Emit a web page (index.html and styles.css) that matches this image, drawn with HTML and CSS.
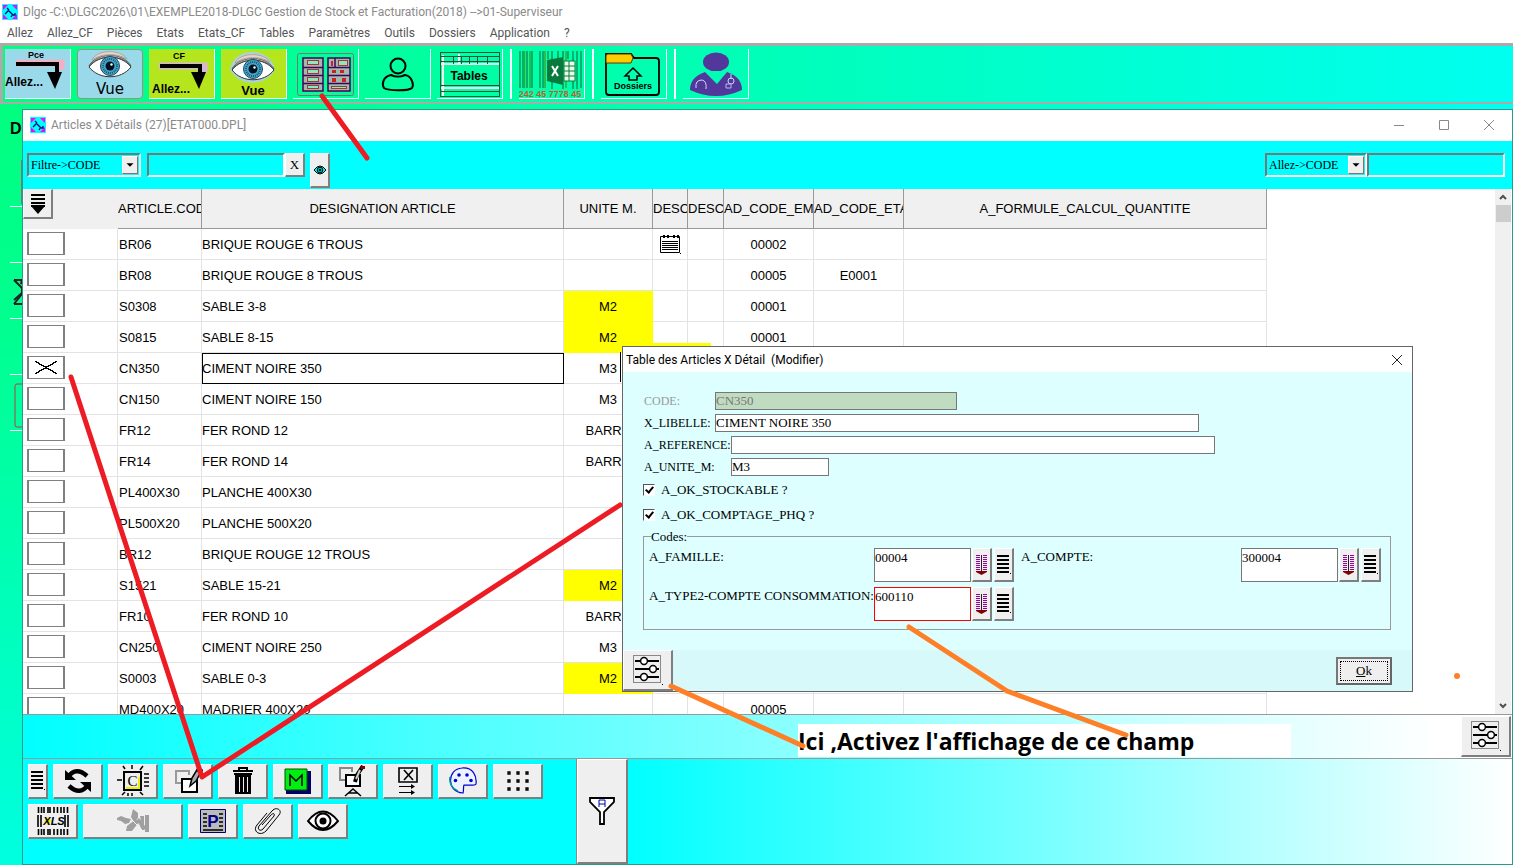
FILE: index.html
```html
<!DOCTYPE html>
<html lang="fr">
<head>
<meta charset="utf-8">
<title>Dlgc - Gestion de Stock et Facturation</title>
<link rel="stylesheet" href="styles.css">
</head>
<body>
<svg class="defs" width="0" height="0" aria-hidden="true">
  <symbol id="logo" viewBox="0 0 16 16">
    <rect width="16" height="16" fill="#0ff"/>
    <path d="M1 6V1h5zM10 1h5v5zM1 10v5h5zM10 15l5-5v5z" fill="#f0f"/>
    <path d="M5 4l2 2M6 6l5 5M13 9v2h-2M3 10l3-3M9 13l2-3" stroke="#008" stroke-width="1.3" fill="none"/>
  </symbol>
  <symbol id="eye-photo" viewBox="0 0 46 30">
    <path d="M2 15C8 2 36 0 44 15C36 3 10 4 2 15z" fill="#c9b8ac" stroke="#555" stroke-width=".8"/>
    <path d="M5 9C10 -2 34 -2 40 8C30 2 15 2 5 9z" fill="#e8d4c4" stroke="#a99a90" stroke-width=".8"/>
    <path d="M2 16C12 3 34 3 44 16C34 29 12 29 2 16z" fill="#fff" stroke="#333"/>
    <circle cx="23" cy="15" r="9.5" fill="#48a8c8" stroke="#246"/>
    <circle cx="23" cy="15" r="7" fill="none" stroke="#157" stroke-width="2" stroke-dasharray="1 1"/>
    <circle cx="23" cy="15" r="4.5" fill="#012"/>
    <circle cx="24.500" cy="13.500" r="1.200" fill="#fff"/>
  </symbol>
  <symbol id="sliders" viewBox="0 0 30 30">
    <rect x=".5" y=".5" width="27" height="27" fill="none" stroke="#888"/>
    <path d="M2 6h24M2 14h24M2 22h24" stroke="#000" stroke-width="2"/>
    <g fill="#fff" stroke="#000" stroke-width="1.500"><circle cx="11" cy="6" r="3.400"/><circle cx="20" cy="14" r="3.400"/><circle cx="11" cy="22" r="3.400"/></g>
    <path d="M29 29h1v1h-1z"/>
  </symbol>
  <symbol id="lines" viewBox="0 0 14 20">
    <path d="M0 1h12M0 5h12M0 9h12M0 13h12M0 17h12" stroke="#000" stroke-width="2"/><path d="M13 18h1v1h-1z"/>
  </symbol>
  <symbol id="pull" viewBox="0 0 12 20">
    <path d="M0 .5h4M0 2.500h4M0 4.500h4M0 6.500h4M0 8.500h4M0 10.500h4M0 12.500h4M0 14.500h4M7 .5h4M7 2.500h4M7 4.500h4M7 6.500h4M7 8.500h4M7 10.500h4M7 12.500h4M7 14.500h4" stroke="#909"/>
    <path d="M5.500 0v17" stroke="#222"/><path d="M0 16h11v1l-5.500 3L0 17z" fill="#800000"/>
  </symbol>
</svg>

<header class="app-title"><svg width="16" height="16"><use href="#logo"/></svg><h1>Dlgc -C:\DLGC2026\01\EXEMPLE2018-DLGC Gestion de Stock et Facturation(2018) --&gt;01-Superviseur</h1></header>
<nav class="menu">
  <button>Allez</button><button>Allez_CF</button><button>Pièces</button><button>Etats</button><button>Etats_CF</button><button>Tables</button><button>Paramètres</button><button>Outils</button><button>Dossiers</button><button>Application</button><button>?</button>
</nav>

<div class="ribbon">
  <button class="tool blue" aria-label="Allez pièces"><svg viewBox="0 0 64 48">
    <text x="23" y="8" class="t9">Pce</text><path d="M11 13h45v7" fill="none" stroke="#f0b0c8" stroke-width="7"/><path d="M11 14h41v9" fill="none" stroke="#000" stroke-width="4"/><path d="M42 22h15l-7 17z"/><text x="0" y="36" class="t14n">Allez...</text></svg></button>
  <button class="tool blue framed" aria-label="Vue pièces"><svg viewBox="0 0 64 48"><use href="#eye-photo" x="9" y="1" width="46" height="30"/><text x="32" y="44" class="t15" text-anchor="middle">Vue</text></svg></button>
  <button class="tool lime" aria-label="Allez CF"><svg viewBox="0 0 64 48">
    <text x="24" y="9" class="t9">CF</text><path d="M10 16h45v7" fill="none" stroke="#d8b8d0" stroke-width="7"/><path d="M11 16h40v9" fill="none" stroke="#000" stroke-width="4"/><path d="M42 22h15l-7 17z"/><text x="3" y="43" class="t14n">Allez...</text></svg></button>
  <button class="tool lime" aria-label="Vue CF"><svg viewBox="0 0 64 48"><path d="M9 20C12 -4 50 -4 54 20C44 36 20 38 9 20z" fill="#a8d4d8"/><use href="#eye-photo" x="9" y="4" width="46" height="30"/><text x="32" y="45" class="t13b" text-anchor="middle">Vue</text></svg></button>
  <button class="tool" aria-label="Articles"><svg viewBox="0 0 64 48">
    <rect x="4.500" y="3.500" width="56" height="42" rx="2" fill="none" stroke="#777"/>
    <g fill="#9fb8b0" stroke="#405" stroke-width="1.500"><rect x="10" y="8" width="20" height="33"/><rect x="35" y="8" width="22" height="33"/><path d="M10 17.500h20M10 25.500h20M10 33.500h20M35 17.500h22M35 25.500h22M35 33.500h22M42 8v9"/></g>
    <g fill="#8ce8c0" stroke="#a33"><rect x="14.500" y="10.500" width="11" height="4"/><rect x="14.500" y="19.500" width="11" height="4"/><rect x="14.500" y="27.500" width="11" height="4"/><rect x="14.500" y="35.500" width="11" height="3"/><rect x="45.500" y="10.500" width="9" height="5"/><rect x="38.500" y="36.500" width="15" height="2"/></g>
    <path d="M38 11h2v5h-2zM39 20h4v3h-4zM47 20h4v3h-4zM39 28h4v4h-4zM49 28h4v4h-4z" fill="#c22"/></svg></button>
  <button class="tool" aria-label="Tiers"><svg viewBox="0 0 64 48"><g fill="none" stroke="#000" stroke-width="2"><circle cx="33" cy="16" r="7.500"/><path d="M26 25C17 27 17 35 19 38C23 41 44 41 47 38C49 35 47 26 40 25C36 27 30 27 26 25z"/></g></svg></button>
  <button class="tool" aria-label="Tables"><svg viewBox="0 0 64 48"><path d="M3 14h60M3 38h60M6 5v41M22 4v10" stroke="#eee" stroke-width="2"/><path d="M3 2.500h60M3 6.500h60M3 11.500h60M3 35.500h60M3 41.500h60M3 46.500h60M3.500 2v45M62.500 2v45M16.500 6v8M24.500 6v8M32.500 6v8M40.500 6v8M50.500 6v8" stroke="#154" fill="none"/><text x="32" y="30" class="t12b" text-anchor="middle">Tables</text></svg></button>
  <span class="rule"></span>
  <button class="tool" aria-label="Export Excel"><svg viewBox="0 0 64 48"><path d="M1 1v37M4 1v37M8 1v37M13 1v37M21 1v37M24 1v37M29 1v8M33 1v38M39 1v8M44 1v38M49 1v8M54 1v38M58 1v38M62 1v37" stroke="#063"/><path d="M5.500 1v37M11 1v37M26 1v37M47 1v37" stroke="#3a3" stroke-width="1.500"/><path d="M28 10l16-3v28l-16-4z" fill="#087a3c"/><path d="M45 11h11v20H45z" fill="#eaffea" stroke="#087a3c"/><path d="M45 16h11M45 21h11M45 26h11M50 11v20" stroke="#087a3c"/><path d="M33 16l6 10M39 16l-6 10" stroke="#fff" stroke-width="2"/><text x="31" y="47" text-anchor="middle" class="t8r">242 45 7778 45</text></svg></button>
  <span class="rule"></span>
  <button class="tool" aria-label="Dossiers"><svg viewBox="0 0 64 48"><path d="M5 4h25l3 4h22q3 0 3 3v31q0 3-3 3H8q-3 0-3-3z" fill="none" stroke="#000" stroke-width="1.800"/><path d="M5 13V6q0-2 2-2h23l2 4-2 5z" fill="#fc0" stroke="#630"/><path d="M32 18l8 8h-4v4h-8v-4h-4z" fill="none" stroke="#000" stroke-width="1.500"/><text x="32" y="39" class="t9" text-anchor="middle">Dossiers</text></svg></button>
  <span class="rule"></span>
  <button class="tool" aria-label="Superviseur"><svg viewBox="0 0 64 48"><g fill="#53389c"><ellipse cx="33" cy="12" rx="13" ry="9.500"/><path d="M22 22q-15 5-15 18q26 12 52 0q0-13-15-18l-10 12z"/></g><path d="M24 21l9 11 9-11z" fill="#00ffb4"/><path d="M13 38q-1-8 6-8q5 1 4 9M48 24v5" stroke="#cdd8ff" fill="none"/><circle cx="48" cy="31" r="3" fill="none" stroke="#cdd8ff"/><path d="M43 34h5v4h-5z" fill="none" stroke="#aab8f0"/></svg></button>
</div>

<main class="workspace">
  <div class="strip"><svg width="22" height="340" aria-hidden="true"><text x="10" y="30" class="t16b">D</text><path d="M10 102.500h12M10 158.500h12M10 214.500h12M10 270.500h12M10 326.500h12" stroke="#fff"/><path d="M21.500 56v44" stroke="#778"/><path d="M14 176h8l-1 4 1-2M14 176l8 8v6l-8 10M14 200h8M14 196l8-7" fill="none" stroke="#222" stroke-width="2"/><path d="M22 280h-5q-2 0-2 2v39q0 2 2 2h5" fill="none" stroke="#a44"/></svg></div>

  <section class="window">
    <header class="win-title"><svg width="16" height="16"><use href="#logo"/></svg><h2>Articles X Détails (27)[ETAT000.DPL]</h2>
      <div class="win-buttons">
        <button aria-label="Réduire"><svg width="12" height="12"><path d="M1 6.500h10" stroke="#888"/></svg></button>
        <button aria-label="Agrandir"><svg width="12" height="12"><path d="M1.500 1.500h9v9h-9z" fill="none" stroke="#888"/></svg></button>
        <button aria-label="Fermer"><svg width="12" height="12"><path d="M1 1l10 10M11 1L1 11" stroke="#888"/></svg></button>
      </div></header>

    <div class="filters">
      <span class="combo wide"><select aria-label="Filtre"><option>Filtre-&gt;CODE</option></select><svg class="drop" viewBox="0 0 16 18"><path d="M4 7h8l-4 4z"/></svg></span>
      <input class="sunken gap" type="text" aria-label="Valeur du filtre">
      <button class="raised clear">X</button>
      <button class="raised peek" aria-label="Voir"><svg width="14" height="12" viewBox="0 0 14 12"><path d="M1 6q6-8 12 0q-6 8-12 0z" fill="#0ff" stroke="#000"/><circle cx="7" cy="6" r="2.800" fill="#0cc" stroke="#000"/><circle cx="7" cy="6" r="1.200"/></svg></button>
      <span class="combo goto"><select aria-label="Allez"><option>Allez-&gt;CODE</option></select><svg class="drop" viewBox="0 0 16 18"><path d="M4 7h8l-4 4z"/></svg></span>
      <input class="sunken" type="text" aria-label="Aller au code">
    </div>

    <div class="grid">
      <div class="grid-scroll">
      <table>
        <colgroup><col class="c-sel"><col class="c-code"><col class="c-name"><col class="c-unit"><col class="c-d1"><col class="c-d2"><col class="c-e"><col class="c-e"><col class="c-form"></colgroup>
        <thead><tr><th class="first"><button class="raised sort" aria-label="Trier"><svg width="16" height="20" viewBox="0 0 16 20"><path d="M1 1h14M1 5h14M1 9h14M1 12h14" stroke="#000" stroke-width="2"/><path d="M1 12h14l-7 8z"/></svg></button></th><th class="l">ARTICLE.COD</th><th>DESIGNATION ARTICLE</th><th>UNITE M.</th><th class="l">DESC</th><th class="l">DESC</th><th class="l">AD_CODE_EM</th><th class="l">AD_CODE_ETA</th><th>A_FORMULE_CALCUL_QUANTITE</th></tr></thead>
        <tbody>
        <tr><td><input type="checkbox" aria-label="BR06"></td><td>BR06</td><td>BRIQUE ROUGE 6 TROUS</td><td></td><td><svg class="note" width="22" height="20" viewBox="0 0 22 20"><path d="M1.500 2.500h19v16h-19z" fill="none" stroke="#000"/><path d="M4 1h2v3H4zM8 1h2v3H8zM14 1h2v3h-2zM18 1h2v3h-2zM21 19h1v1h-1z"/><path d="M3 7.500h16M3 9.500h16M3 11.500h16M3 13.500h16M3 15.500h16" stroke="#000"/></svg></td><td></td><td>00002</td><td></td><td></td></tr>
        <tr><td><input type="checkbox" aria-label="BR08"></td><td>BR08</td><td>BRIQUE ROUGE 8 TROUS</td><td></td><td></td><td></td><td>00005</td><td>E0001</td><td></td></tr>
        <tr><td><input type="checkbox" aria-label="S0308"></td><td>S0308</td><td>SABLE 3-8</td><td class="hl">M2</td><td></td><td></td><td>00001</td><td></td><td></td></tr>
        <tr><td><input type="checkbox" aria-label="S0815"></td><td>S0815</td><td>SABLE 8-15</td><td class="hl">M2</td><td></td><td></td><td>00001</td><td></td><td></td></tr>
        <tr><td><input type="checkbox" aria-label="CN350" checked></td><td>CN350</td><td class="focus">CIMENT NOIRE 350</td><td>M3</td><td></td><td></td><td></td><td></td><td></td></tr>
        <tr><td><input type="checkbox" aria-label="CN150"></td><td>CN150</td><td>CIMENT NOIRE 150</td><td>M3</td><td></td><td></td><td></td><td></td><td></td></tr>
        <tr><td><input type="checkbox" aria-label="FR12"></td><td>FR12</td><td>FER ROND 12</td><td>BARRE</td><td></td><td></td><td></td><td></td><td></td></tr>
        <tr><td><input type="checkbox" aria-label="FR14"></td><td>FR14</td><td>FER ROND 14</td><td>BARRE</td><td></td><td></td><td></td><td></td><td></td></tr>
        <tr><td><input type="checkbox" aria-label="PL400X30"></td><td>PL400X30</td><td>PLANCHE 400X30</td><td></td><td></td><td></td><td></td><td></td><td></td></tr>
        <tr><td><input type="checkbox" aria-label="PL500X20"></td><td>PL500X20</td><td>PLANCHE 500X20</td><td></td><td></td><td></td><td></td><td></td><td></td></tr>
        <tr><td><input type="checkbox" aria-label="BR12"></td><td>BR12</td><td>BRIQUE ROUGE 12 TROUS</td><td></td><td></td><td></td><td></td><td></td><td></td></tr>
        <tr><td><input type="checkbox" aria-label="S1521"></td><td>S1521</td><td>SABLE 15-21</td><td class="hl">M2</td><td></td><td></td><td></td><td></td><td></td></tr>
        <tr><td><input type="checkbox" aria-label="FR10"></td><td>FR10</td><td>FER ROND 10</td><td>BARRE</td><td></td><td></td><td></td><td></td><td></td></tr>
        <tr><td><input type="checkbox" aria-label="CN250"></td><td>CN250</td><td>CIMENT NOIRE 250</td><td>M3</td><td></td><td></td><td></td><td></td><td></td></tr>
        <tr><td><input type="checkbox" aria-label="S0003"></td><td>S0003</td><td>SABLE 0-3</td><td class="hl">M2</td><td></td><td></td><td></td><td></td><td></td></tr>
        <tr><td><input type="checkbox" aria-label="MD400X20"></td><td>MD400X20</td><td>MADRIER 400X20</td><td></td><td></td><td></td><td>00005</td><td></td><td></td></tr>
        </tbody>
      </table>
      </div>
      <div class="scrollbar"><svg width="8" height="16" viewBox="0 0 8 16"><path d="M1 10l3-3 3 3" fill="none" stroke="#505050" stroke-width="2"/></svg><span class="thumb"></span><svg class="down" width="8" height="16" viewBox="0 0 8 16"><path d="M1 6l3 3 3-3" fill="none" stroke="#505050" stroke-width="2"/></svg></div>
    </div>

    <div class="band"><button class="raised adjust" aria-label="Options"><svg width="30" height="30"><use href="#sliders"/></svg></button></div>

    <footer class="actions">
      <div class="buttons">
        <div class="line">
          <button class="raised slim" aria-label="Liste"><svg width="14" height="20"><use href="#lines"/></svg></button>
          <button class="raised" aria-label="Actualiser"><svg width="30" height="28" viewBox="0 0 30 28"><path d="M5 10Q13-1 24 9M25 18Q17 29 6 19" fill="none" stroke="#000" stroke-width="4.500"/><path d="M2 3v10h11zM28 25V15H17z"/></svg></button>
          <button class="raised" aria-label="Créer"><svg width="32" height="32" viewBox="0 0 32 32"><rect x="7" y="7" width="17" height="18" fill="#efefef" stroke="#000" stroke-width="2"/><path d="M22 12v11H9" fill="none" stroke="#ee0" stroke-width="2"/><text x="15.500" y="21" text-anchor="middle" class="serif15">C</text><path d="M6 1l2 3M15 0v4M26 1l-3 4M0 15h5M27 9h5M27 13h5M27 17h5M27 21h5M5 30l3-3M11 31v-3M15 31v-3M26 30l-3-3" stroke="#000" stroke-width="1.500"/></svg></button>
          <button class="raised" aria-label="Modifier"><svg width="32" height="30" viewBox="0 0 32 30"><path d="M12 17H4V5h13v4" fill="none" stroke="#999" stroke-width="2"/><rect x="10" y="13" width="15" height="13" fill="#fff" stroke="#000" stroke-width="2"/><path d="M18 20l2-8 6-10 4 2-6 11z" fill="#aaa" stroke="#000" stroke-width="1.500"/><path d="M25 3l5 3" stroke="#000" stroke-width="4"/></svg></button>
          <button class="raised" aria-label="Supprimer"><svg width="22" height="28" viewBox="0 0 22 28"><path d="M7 3V1h8v2M1 4h20M2 7h18" fill="none" stroke="#000" stroke-width="2"/><path d="M3 8h16v19H3z"/><path d="M7.500 10v15M11.500 10v15M15.500 10v15" stroke="#eee"/></svg></button>
          <button class="raised" aria-label="Mémo"><svg width="27" height="26" viewBox="0 0 27 26"><path d="M2 3h25v23H2z" fill="#006"/><path d="M1 1h22v21H1z" fill="#0e1" stroke="#050"/><path d="M6 18V7l6 6 6-6v11" fill="none" stroke="#000" stroke-width="1.500"/></svg></button>
          <button class="raised" aria-label="Modifier le modèle"><svg width="30" height="32" viewBox="0 0 30 32"><path d="M8 15H2V3h12v4" fill="none" stroke="#888" stroke-width="2"/><rect x="8" y="10" width="14" height="11" fill="#fff" stroke="#000" stroke-width="2"/><path d="M17 17l2-7 6-9" fill="none" stroke="#000" stroke-width="4"/><path d="M18 14l4-9" stroke="#ccc" stroke-width="2"/><path d="M22 1h5v3h-4z" fill="#800"/><path d="M7 31l8-7 8 7M10 28h10" fill="none" stroke="#000" stroke-width="1.500"/></svg></button>
          <button class="raised" aria-label="Transférer"><svg width="22" height="30" viewBox="0 0 22 30"><path d="M2 2h18v14H2zM7 4l9 10M16 4l-9 10" fill="none" stroke="#000" stroke-width="1.600"/><path d="M2 20.500h14M2 26.500h14" stroke="#000"/><path d="M14 18l4 2.500-4 2.500zM14 24l4 2.500-4 2.500z"/></svg></button>
          <button class="raised" aria-label="Couleurs"><svg width="28" height="28" viewBox="0 0 28 28"><path d="M14 26C-3 25-2 2 13 1C24 0 28 9 27 17c-1 2-9 1-12 1-1 2 0 5-1 8z" fill="#eef4ff" stroke="#00c" stroke-width="1.200"/><path d="M9 24C2 21 0 15 1 10" fill="none" stroke="#099" stroke-width="1.400"/><g fill="#00d"><circle cx="10" cy="8" r="1.800"/><circle cx="18" cy="8" r="1.800"/><circle cx="6.500" cy="13.500" r="1.800"/><circle cx="22" cy="13.500" r="1.800"/></g></svg></button>
          <button class="raised" aria-label="Disposition"><svg width="24" height="22" viewBox="0 0 24 22"><path d="M2 2h2v2H2zM11 2h2v2h-2zM20 2h2v2h-2zM2 10h2v2H2zM11 10h2v2h-2zM20 10h2v2h-2zM2 18h2v2H2zM11 18h2v2h-2zM20 18h2v2h-2z" fill="#999" stroke="#000" stroke-width="1.300"/></svg></button>
        </div>
        <div class="line">
          <button class="raised" aria-label="Export XLS"><svg width="32" height="28" viewBox="0 0 32 28"><path d="M1.500 0v6M4.500 0v6M7 0v6M11 0v6M13 0v6M17 0v6M20.500 0v6M24 0v6M27 0v6M30.500 0v6M1.500 22v6M4.500 22v6M7 22v6M11 22v6M13 22v6M17 22v6M20.500 22v6M24 22v6M27 22v6M30.500 22v6M1 8v12M4 8v12M31 8v12M28 8v12" stroke="#000" stroke-width="1.600"/><path d="M7 14l4-4 3 4-3 4z" fill="#ee0"/><text x="17" y="18" text-anchor="middle" class="xls">XLS</text></svg></button>
          <button class="raised double" aria-label="Satellite" disabled><svg width="34" height="24" viewBox="0 0 34 24"><g fill="#a0a0a0"><path d="M1 9l4-2 5 2 5 1-2 4-4 1-4-3-4-1zM15 8l2-8 5 4v5l-4 4zM10 22l1-5 9-7 3 3-7 9zM20 12l3-3 6 8v4zM24 7h4v14h-2l-3-6 2-3zM29 6h4v17h-4z"/></g><path d="M17 12l9 9" stroke="#efefef"/></svg></button>
          <button class="raised" aria-label="Paramètres"><svg width="26" height="25" viewBox="0 0 26 25"><path d="M.5.5h25v23H.5z" fill="#bbb" stroke="#006"/><path d="M3 5h4M3 9h4M3 13h4M3 17h4M19 5h4M19 9h4M19 13h4M19 17h4M3 21h20" stroke="#000" stroke-width="1.300"/><text x="13" y="18" text-anchor="middle" class="t18n">P</text></svg></button>
          <button class="raised" aria-label="Joindre"><svg width="28" height="28" viewBox="0 0 28 28"><path d="M20 9L9 22c-3 3-6 0-4-3L18 4c4-5 11-1 7 4L12 24c-6 6-14 0-9-6L13 6M20 9c1-3-1-3-3-1L8 18" fill="none" stroke="#000" stroke-width="1"/></svg></button>
          <button class="raised" aria-label="Visualiser"><svg width="32" height="22" viewBox="0 0 32 22"><path d="M1 11Q16-8 31 11Q16 29 1 11z" fill="#fff" stroke="#000" stroke-width="2"/><circle cx="16" cy="11" r="7.500" fill="#fff" stroke="#000" stroke-width="2"/><circle cx="16" cy="11" r="3.500"/></svg></button>
        </div>
      </div>
      <button class="raised funnel" aria-label="Filtre avancé"><svg width="26" height="30" viewBox="0 0 26 30"><path d="M1 2h24v4l-10 10v12h-4V16L1 6z" fill="#fff" stroke="#000" stroke-width="1.800"/><path d="M10 11V4h6v7M10 8h6" fill="none" stroke="#00a"/></svg></button>
      <div class="fade"></div>
    </footer>

    <form class="dialog" role="dialog" aria-labelledby="dlg-title">
      <header class="dlg-title"><h3 id="dlg-title">Table des Articles X Détail &nbsp;(Modifier)</h3><button type="button" aria-label="Fermer"><svg width="12" height="12"><path d="M1 1l10 10M11 1L1 11" stroke="#222"/></svg></button></header>
      <div class="dlg-body">
        <div class="field"><label class="narrow off" for="code">CODE:</label><input id="code" class="w242" value="CN350" disabled></div>
        <div class="field"><label class="narrow" for="lib">X_LIBELLE:</label><input id="lib" class="w484" value="CIMENT NOIRE 350"></div>
        <div class="field"><label for="ref">A_REFERENCE:</label><input id="ref" class="w484" value=""></div>
        <div class="field"><label for="unit">A_UNITE_M:</label><input id="unit" class="w98" value="M3"></div>
        <div class="checks">
          <label><input type="checkbox" checked>A_OK_STOCKABLE ?</label>
          <label><input type="checkbox" checked>A_OK_COMPTAGE_PHQ ?</label>
        </div>
        <fieldset><legend>Codes:</legend>
          <div class="codes">
            <div class="code"><label for="fam">A_FAMILLE:</label><textarea id="fam">00004</textarea><button type="button" class="raised pick" aria-label="Choisir famille"><svg width="12" height="20"><use href="#pull"/></svg></button><button type="button" class="raised pick" aria-label="Liste familles"><svg width="14" height="20"><use href="#lines"/></svg></button></div>
            <div class="code"><label for="cpt">A_COMPTE:</label><textarea id="cpt">300004</textarea><button type="button" class="raised pick" aria-label="Choisir compte"><svg width="12" height="20"><use href="#pull"/></svg></button><button type="button" class="raised pick" aria-label="Liste comptes"><svg width="14" height="20"><use href="#lines"/></svg></button></div>
            <div class="code"><label for="conso">A_TYPE2-COMPTE CONSOMMATION:</label><textarea id="conso" class="alert">600110</textarea><button type="button" class="raised pick" aria-label="Choisir compte consommation"><svg width="12" height="20"><use href="#pull"/></svg></button><button type="button" class="raised pick" aria-label="Liste comptes consommation"><svg width="14" height="20"><use href="#lines"/></svg></button></div>
          </div>
        </fieldset>
      </div>
      <footer class="dlg-foot"><button type="button" class="raised adjust" aria-label="Options"><svg width="30" height="30"><use href="#sliders"/></svg></button><button type="button" class="ok"><span><u>O</u>k</span></button></footer>
    </form>
  </section>
</main>

<p class="callout">Ici ,Activez l'affichage de ce champ</p>
<svg class="marks" aria-hidden="true">
  <g fill="none" stroke="#ed1c24" stroke-width="5" stroke-linecap="round" stroke-linejoin="round"><path d="M322 96L367 158"/><path d="M71 377L202 777L620 505"/></g>
  <g fill="none" stroke="#ff7f27" stroke-width="5" stroke-linecap="round" stroke-linejoin="round"><path d="M671 686L803 746"/><path d="M909 627L1007 691L1126 735"/></g>
  <circle cx="1457" cy="676" r="3" fill="#ff7f27"/>
</svg>
</body>
</html>
```
FILE: styles.css
```css
* { box-sizing: border-box; }
body { margin: 0; min-height: 100vh; display: flex; flex-direction: column; position: relative; overflow: hidden; font: 12px Roboto, "Open Sans", sans-serif; background: #fff; color: #000; }
button { font: inherit; color: inherit; margin: 0; padding: 0; border: 0; background: none; }
h1, h2, h3 { margin: 0; font-size: 12px; font-weight: 400; }
svg { display: block; flex: none; }
.defs { position: absolute; }

.app-title { display: flex; align-items: center; gap: 5px; height: 23px; padding-left: 2px; color: #8a8a8a; }
.menu { display: flex; gap: 14px; height: 20px; padding: 0 7px; align-items: center; color: #555; }

.ribbon { display: flex; gap: 6px; padding: 3px 2px; border: solid #aaa; border-width: 3px 0 2px 3px; background: linear-gradient(to right, #00ff80, #00ffb8 50%, #00fff0); }
.tool { width: 66px; height: 50px; border: solid #fff; border-width: 0 1px 1px 0; overflow: hidden; }
.tool svg { width: 64px; height: 48px; }
.blue { background: #9ad9ea; }
.lime { background: #b5e61d; }
.framed { border: 1px solid #a88; border-radius: 4px; }
.rule { width: 2px; margin: 0 1px; border: solid; border-width: 0 1px; border-color: #ccc #fff; }
.t9 { font: bold 9px "Liberation Sans", sans-serif; }
.t8r { font: bold 9px "Liberation Sans", sans-serif; fill: #c06030; }
.t12b { font: bold 12px "Liberation Sans", sans-serif; }
.t13b { font: bold 13px "Liberation Sans", sans-serif; }
.t14n { font: bold 12px "Liberation Sans", sans-serif; }
.t15 { font: 15px "DejaVu Sans", sans-serif; }
.t16b { font: bold 16px "Liberation Sans", sans-serif; }
.t18n { font: bold 17px "Liberation Sans", sans-serif; fill: #008; }
.serif15 { font: 15px "Liberation Serif", serif; }
.xls { font: italic bold 11px "Liberation Sans", sans-serif; }

.workspace { flex: 1; display: flex; background: linear-gradient(to right, #00ff80, #00ffb8 50%, #00fff0); }
.strip { width: 22px; background: linear-gradient(#00ff80, #00ff90 30%, #00ffe0); }
.window { position: relative; flex: 1; display: flex; flex-direction: column; margin: 5px 0 0; border: 1px solid #2a9a8a; background: #fff; min-width: 0; }
.win-title { display: flex; align-items: center; gap: 5px; height: 31px; padding: 0 0 2px 7px; color: #8a8a8a; }
.win-title h2 { flex: 1; }
.win-buttons { display: flex; gap: 33px; padding-right: 17px; }

.filters { display: flex; align-items: flex-start; height: 48px; padding: 12px 7px 0 4px; background: #0ff; font: 13px "Liberation Serif", serif; }
.combo { display: grid; width: 102px; height: 24px; font-size: 12px; }
.wide { width: 114px; }
.goto { margin-left: auto; }
.combo > * { grid-area: 1 / 1; }
.combo select { appearance: none; font: inherit; width: 100%; height: 100%; padding: 0 2px; border: 2px solid; border-color: #777 #fff #fff #777; border-radius: 0; background: #0ff; color: #000; }
.drop { width: 16px; height: 18px; margin: 3px 3px 0 0; justify-self: end; background: #efefef; border: 1px solid; border-color: #fff #777 #777 #fff; pointer-events: none; }
.sunken { width: 138px; height: 24px; border: 2px solid; border-color: #777 #fff #fff #777; background: #0ff; font: inherit; }
.gap { margin-left: 6px; }
.raised { display: flex; align-items: center; justify-content: center; width: 50px; height: 35px; background: #efefef; border: solid; border-width: 1px 2px 2px 1px; border-color: #fff #7f7f7f #7f7f7f #fff; }
.clear { width: 20px; height: 24px; }
.peek { width: 20px; height: 35px; margin-left: 5px; }

.grid { flex: 1 0 525px; height: 525px; display: flex; border-bottom: 1px solid #999; }
.grid-scroll { flex: 1; min-width: 0; overflow: hidden; }
table { table-layout: fixed; width: 1244px; border-spacing: 0; font: 13px "Liberation Sans", sans-serif; }
.c-sel { width: 95px; } .c-code { width: 84px; } .c-name { width: 362px; } .c-unit { width: 89px; } .c-d1 { width: 35px; } .c-d2 { width: 36px; } .c-e { width: 90px; } .c-form { width: 363px; }
th { height: 40px; padding: 0; font-weight: 400; background: #f0f0f0; border: solid #999; border-width: 0 1px 1px 0; white-space: nowrap; overflow: hidden; }
th.l { text-align: left; }
th.first { border: 0; vertical-align: top; }
.sort { width: 30px; height: 30px; }
td { height: 31px; padding: 0 1px; border: solid #e3e3e3; border-width: 0 1px 1px 0; text-align: center; white-space: nowrap; overflow: hidden; }
td:first-child { padding: 3px 4px; text-align: left; vertical-align: top; }
td:nth-child(2), td:nth-child(3) { text-align: left; }
td:nth-child(2) { padding-left: 1px; }
td:nth-child(3) { padding-left: 0; }
td.hl { background: #ff0; border-color: #ff0; }
td.focus { outline: 1px solid #000; outline-offset: -1px; }
td input { appearance: none; display: block; width: 38px; height: 23px; margin: 0; border: solid #808080; border-width: 1px 2px; background: #fff; }
td input:checked { background: linear-gradient(30deg, transparent 47%, #000 47%, #000 53%, transparent 53%) center / 22px 13px no-repeat, linear-gradient(-30deg, transparent 47%, #000 47%, #000 53%, transparent 53%) center / 22px 13px no-repeat; }
.note { margin: auto; }
.scrollbar { display: flex; flex-direction: column; align-items: center; width: 16px; margin-right: 1px; background: #f0f0f0; }
.thumb { width: 15px; height: 17px; background: #cdcdcd; }
.down { margin-top: auto; }

.band { display: flex; justify-content: flex-end; height: 44px; padding: 1px 1px 0 0; border-bottom: 1px solid #999; background: linear-gradient(to right, #0ff, #fff 95%); }
.adjust { height: 41px; }
.actions { display: flex; min-height: 105px; background: #0ff; }
.buttons { width: 554px; display: flex; flex-direction: column; gap: 5px; padding: 5px; border-right: 1px solid #888; }
.line { display: flex; gap: 5px; }
.slim { width: 20px; }
.double { width: 100px; }
.funnel { height: auto; width: 51px; }
.fade { flex: 1; background: linear-gradient(to right, #0ff, #fff); }

.dialog { position: absolute; left: 599px; top: 236px; width: 791px; border: 1px solid #666; background: #dff; font: 13px "Liberation Serif", serif; }
.dialog::before { content: ""; position: absolute; left: -2px; top: -4px; width: 90px; height: 3px; background: #ff0; }
.dialog::after { content: ""; position: absolute; left: -3px; top: 5px; width: 1px; height: 30px; background: #000; }
.dlg-title { display: flex; align-items: center; justify-content: space-between; height: 25px; padding: 0 9px 0 3px; background: #fff; font: 12px Roboto, "Open Sans", sans-serif; }
.dlg-body { padding: 20px 21px 20px 20px; }
.field { display: flex; height: 22px; align-items: flex-start; }
.field label { width: 88px; padding-left: 1px; font-size: 12px; line-height: 18px; }
.field .narrow { width: 72px; }
.off { color: #999; }
.field input { height: 18px; padding: 0; border: 1px solid #777; font: inherit; background: #fff; }
.field input:disabled { background: #c0dcc0; color: #777; }
.w98 { width: 98px; } .w242 { width: 242px; } .w484 { width: 484px; }
.checks { display: grid; gap: 7px; padding: 1px 0; }
.checks label { display: flex; align-items: center; gap: 6px; height: 18px; }
.checks input { appearance: none; width: 12px; height: 12px; margin: 0; border: 1px solid; border-color: #555 #fff #fff #555; background: #fff; display: grid; place-items: center; }
.checks input:checked::before { content: ""; width: 3px; height: 6px; border: solid #000; border-width: 0 2px 2px 0; transform: rotate(40deg); margin-bottom: 2px; }
fieldset { margin: 4px 0 0; padding: 4px 8px 8px 5px; border: 1px solid #999; min-width: 0; }
legend { margin-left: 2px; padding: 0; line-height: 15px; }
.codes { display: grid; grid-template-columns: 365px 360px; gap: 5px 7px; }
.code { display: flex; align-items: flex-start; }
.code label { flex: 1; line-height: 18px; white-space: nowrap; }
.code textarea { flex: none; width: 97px; height: 34px; padding: 0; border: 1px solid #777; font: inherit; line-height: 17px; resize: none; overflow: hidden; }
.code .alert { border-color: #f00; }
.pick { flex: none; width: 20px; height: 34px; margin-left: 1px; }
.pick + .pick { margin-left: 2px; }
.dlg-foot { display: flex; justify-content: space-between; align-items: center; padding-right: 20px; background: #d7f9f9; }
.ok { width: 56px; height: 28px; padding: 2px; background: #efefef; border: 2px solid; border-color: #777 #666 #666 #777; }
.ok span { display: block; height: 20px; line-height: 18px; border: 1px dotted #000; }

.callout { position: absolute; left: 798px; top: 724px; width: 493px; height: 33px; margin: 0; background: #fff; font: bold 23px/35px "Open Sans", sans-serif; white-space: nowrap; }
.marks { position: absolute; left: 0; top: 0; width: 100%; height: 100%; pointer-events: none; }
```
